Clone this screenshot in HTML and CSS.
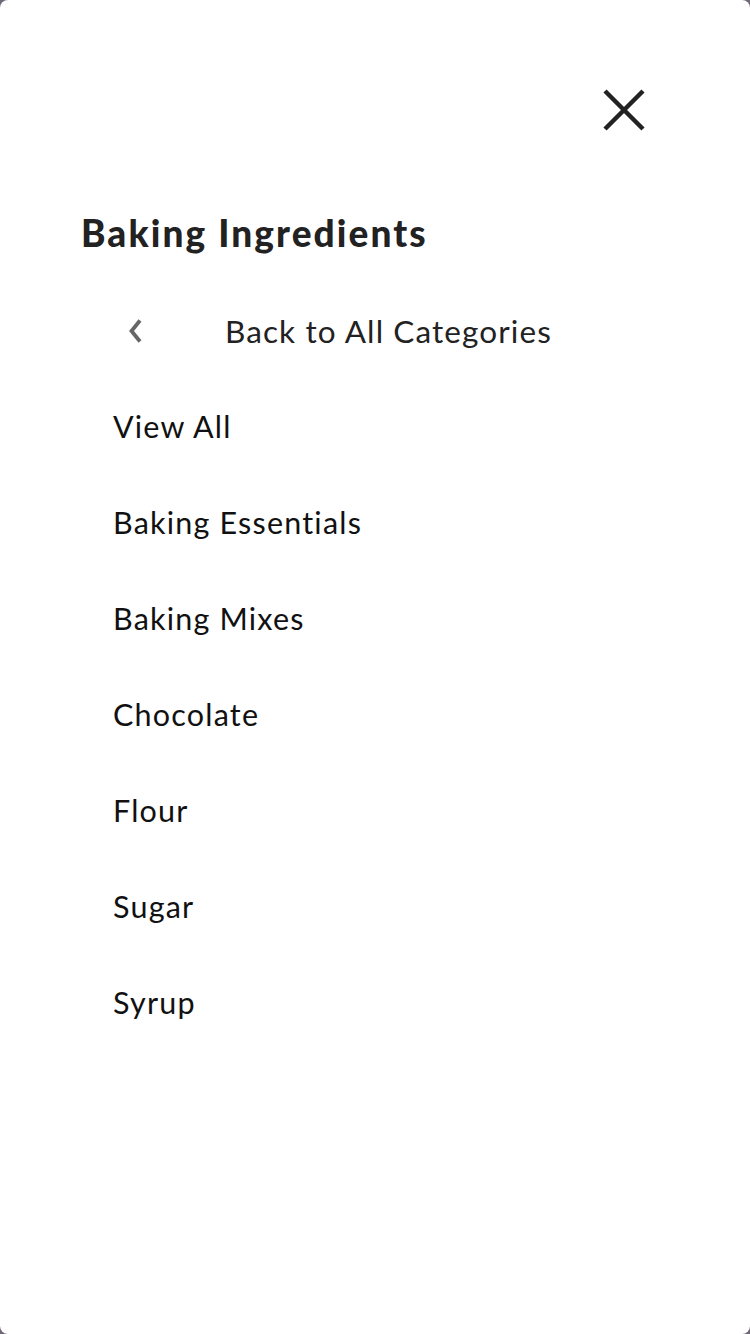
FILE: index.html
```html
<!DOCTYPE html>
<html lang="en">
<head>
<meta charset="utf-8">
<link rel="stylesheet" href="styles.css">
<title>Baking Ingredients</title>
</head>
<body>
<div class="panel">
  <div class="top">
    <button class="close" aria-label="Close">
      <svg width="44" height="42" viewBox="0 0 44 42"><path d="M3 2 L41 40 M41 2 L3 40" stroke="#222" stroke-width="4.5" fill="none"/></svg>
    </button>
  </div>
  <h1 class="title">Baking Ingredients</h1>
  <a class="back">
    <svg class="chev" width="14" height="26" viewBox="0 0 14 26"><path d="M12 2.5 L3.5 13 L12 23.5" stroke="#666" stroke-width="3.8" fill="none"/></svg>
    <span>Back to All Categories</span>
  </a>
  <ul class="list">
    <li>View All</li>
    <li>Baking Essentials</li>
    <li>Baking Mixes</li>
    <li>Chocolate</li>
    <li>Flour</li>
    <li>Sugar</li>
    <li>Syrup</li>
  </ul>
</div>
</body>
</html>
```
FILE: styles.css
```css
html, body { margin: 0; padding: 0; }
body {
  background: #6f6876;
  font-family: "Lato", "Liberation Sans", sans-serif;
  width: 750px;
  height: 1334px;
}
.panel {
  background: #fff;
  width: 750px;
  height: 1334px;
  border-radius: 8px;
  box-sizing: border-box;
  padding: 89px 0 0 0;
}
.top {
  display: flex;
  justify-content: flex-end;
  padding-right: 104px;
  height: 42px;
}
.close {
  background: none;
  border: 0;
  padding: 0;
  width: 44px;
  height: 42px;
  display: block;
}
.close svg { display: block; }
.title {
  margin: 74px 0 0 81px;
  font-size: 37px;
  font-weight: 900;
  color: #222;
  line-height: 56px;
  letter-spacing: 2.1px;
}
.back {
  display: flex;
  align-items: center;
  margin: 54px 0 0 128px;
  height: 32px;
  color: #222;
  font-size: 31.5px;
  letter-spacing: 1.1px;
}
.chev { display: block; margin-right: 83px; }
.list {
  list-style: none;
  margin: 47px 0 0 113px;
  padding: 0;
}
.list li {
  height: 96px;
  line-height: 64px;
  font-size: 30.5px;
  color: #111;
  letter-spacing: 1.2px;
}
```
